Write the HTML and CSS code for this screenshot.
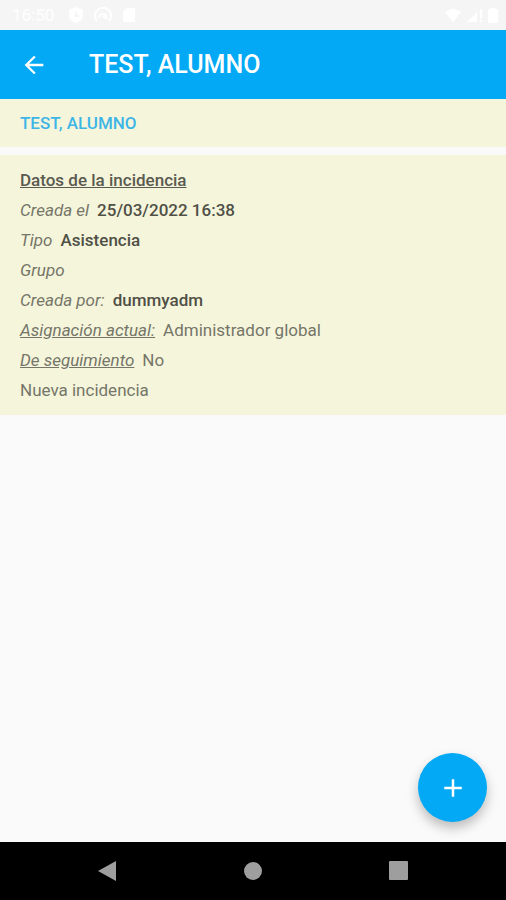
FILE: index.html
```html
<!DOCTYPE html>
<html lang="es">
<head>
    <meta charset="UTF-8">
    <meta name="viewport" content="width=device-width, initial-scale=1.0">
    <title>TEST, ALUMNO</title>
    <link rel="stylesheet" href="styles.css">
</head>
<body>

<div class="status-bar">
    <span class="time">16:50</span>
    <svg width="16" height="18" viewBox="0 0 16 18"><path fill="#fff" fill-rule="evenodd" d="M8 1l7 3v5c0 4-3 7-7 8-4-1-7-4-7-8V4zM7 6v5h4V9H9V6z"/></svg>
    <svg width="18" height="18" viewBox="0 0 18 18" fill="none" stroke="#fff" stroke-width="2"><path d="M3 15a8 8 0 1 1 12 0M5 12a4 4 0 1 1 8 0M9 10l3 3"/></svg>
    <svg width="14" height="16" viewBox="0 0 14 16"><path fill="#fff" d="M5 1h8v14H1V5z"/></svg>
    <span class="spacer"></span>
    <svg width="18" height="14" viewBox="0 0 18 14"><path fill="#fff" d="M1 4c5-4 11-4 16 0l-8 10z"/></svg>
    <svg width="18" height="14" viewBox="0 0 18 14"><path fill="#fff" d="M1 14L11 4v10zM14 1h2v10h-2zM14 12h2v2h-2z"/></svg>
    <svg width="10" height="15" viewBox="0 0 10 15"><path fill="#fff" d="M3 0h4v1h3v14H0V1h3z"/></svg>
</div>

<header class="toolbar">
    <button class="back" aria-label="Volver">
        <svg width="28" height="28" viewBox="0 0 24 24"><path fill="#fff" d="M20 11H7.83l5.59-5.59L12 4l-8 8 8 8 1.41-1.41L7.83 13H20z"/></svg>
    </button>
    <h1>TEST, ALUMNO</h1>
</header>

<main>
    <h2 class="student">TEST, ALUMNO</h2>

    <section class="details">
        <h3>Datos de la incidencia</h3>
        <p><i>Creada el</i><b>25/03/2022 16:38</b></p>
        <p><i>Tipo</i><b>Asistencia</b></p>
        <p><i>Grupo</i></p>
        <p><i>Creada por:</i><b>dummyadm</b></p>
        <p><i class="underline">Asignación actual:</i><span>Administrador global</span></p>
        <p><i class="underline">De seguimiento</i><span>No</span></p>
        <p>Nueva incidencia</p>
    </section>

    <button class="fab" aria-label="Añadir">
        <svg width="30" height="30" viewBox="0 0 24 24"><path fill="#fff" d="M19 13h-6v6h-2v-6H5v-2h6V5h2v6h6z"/></svg>
    </button>
</main>

<nav class="nav-bar">
    <button aria-label="Atrás"><svg width="20" height="22" viewBox="0 0 20 22"><path d="M1 11L19 1v20z"/></svg></button>
    <button aria-label="Inicio"><svg width="20" height="20" viewBox="0 0 20 20"><circle cx="10" cy="10" r="9"/></svg></button>
    <button aria-label="Recientes"><svg width="20" height="20" viewBox="0 0 20 20"><rect width="19" height="19" rx="1"/></svg></button>
</nav>

</body>
</html>
```
FILE: styles.css
```css
* {
    box-sizing: border-box;
}
body {
    margin: 0;
    min-height: 100vh;
    display: flex;
    flex-direction: column;
    font-family: Roboto, sans-serif;
    font-size: 17px;
    color: #757568;
    background-color: #fafafa;
}
h1, h2, h3, p {
    margin: 0;
}
svg {
    display: block;
}
button {
    display: flex;
    align-items: center;
    justify-content: center;
    padding: 0;
    border: none;
    background: none;
    cursor: pointer;
}
.status-bar {
    display: flex;
    align-items: center;
    height: 30px;
    padding: 0 8px 0 12px;
    background-color: #f5f5f5;
}
.status-bar svg {
    margin-left: 4px;
}
.status-bar .time {
    margin-right: 10px;
    font-size: 17px;
    color: white;
}
.status-bar .time ~ svg {
    flex: none;
}
.status-bar .time + svg + svg,
.status-bar .time + svg + svg + svg {
    margin-left: 10px;
}
.spacer {
    flex: 1;
}
.toolbar {
    display: flex;
    align-items: center;
    height: 69px;
    padding: 0 20px;
    background-color: #03a9f4;
}
.toolbar h1 {
    margin-left: 41px;
    font-size: 25px;
    font-weight: 500;
    color: white;
}
main {
    position: relative;
    flex: 1;
}
.student {
    padding: 0 20px;
    margin-bottom: 8px;
    font-size: 17px;
    font-weight: 500;
    line-height: 48px;
    color: #3db5e6;
    background-color: #f5f5dc;
}
.details {
    padding: 10px 20px;
    line-height: 30px;
    background-color: #f5f5dc;
}
.details h3 {
    font-size: 17px;
    font-weight: 500;
    text-decoration: underline;
    color: #5a5a50;
}
.details p {
    display: flex;
    gap: 8px;
}
.details b {
    font-weight: 500;
    color: #505046;
}
.underline {
    text-decoration: underline;
}
.fab {
    position: absolute;
    right: 19px;
    bottom: 20px;
    width: 69px;
    height: 69px;
    border-radius: 50%;
    background-color: #03a9f4;
    box-shadow: 0 6px 12px rgba(0, 0, 0, 0.25);
}
.nav-bar {
    display: grid;
    grid-template-columns: repeat(3, 1fr);
    height: 58px;
    padding: 0 34px;
    background-color: black;
}
.nav-bar svg {
    fill: #9e9e9e;
}
```
